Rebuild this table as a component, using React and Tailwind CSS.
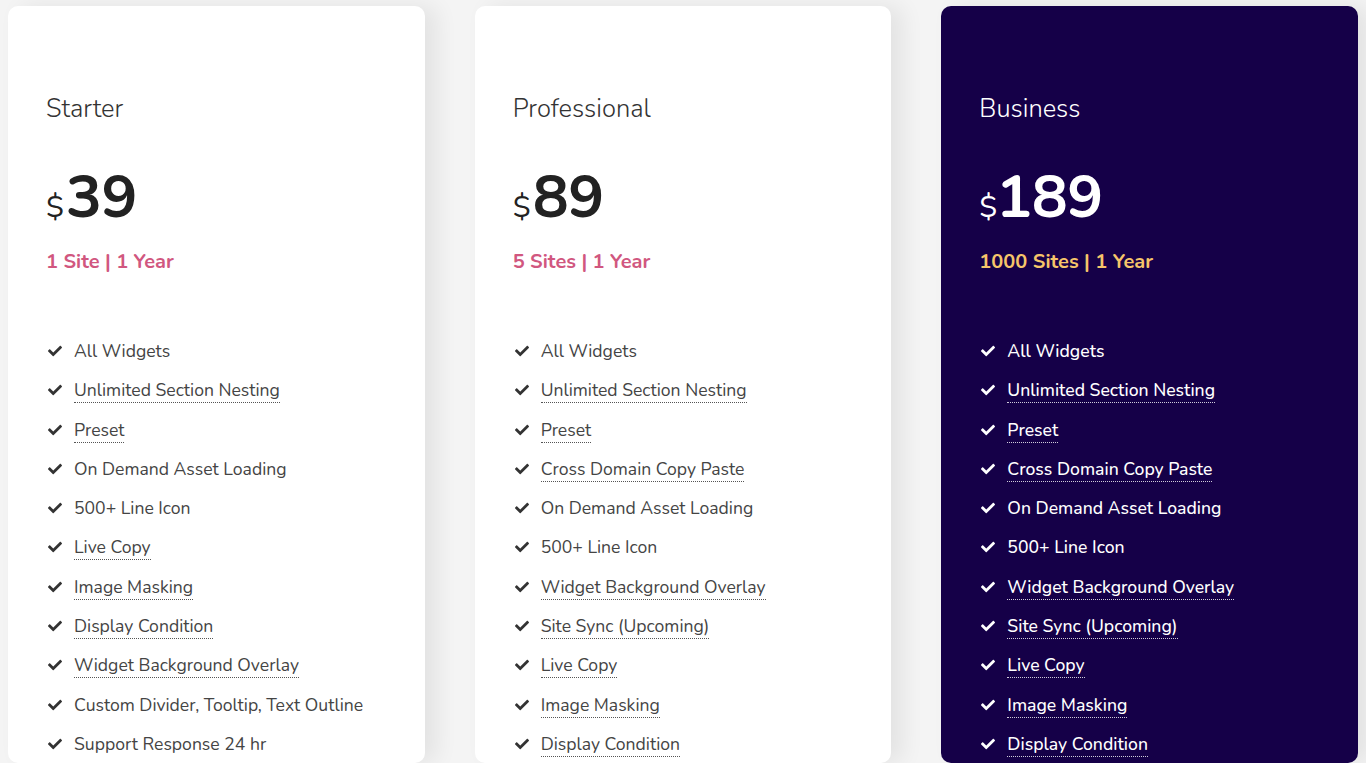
import React from "react";
import { FaCheck } from "react-icons/fa";

const plans = [
  {
    name: "Starter",
    price: "39",
    sub: "1 Site | 1 Year",
    dark: false,
    features: [
      ["All Widgets", false],
      ["Unlimited Section Nesting", true],
      ["Preset", true],
      ["On Demand Asset Loading", false],
      ["500+ Line Icon", false],
      ["Live Copy", true],
      ["Image Masking", true],
      ["Display Condition", true],
      ["Widget Background Overlay", true],
      ["Custom Divider, Tooltip, Text Outline", false],
      ["Support Response 24 hr", false],
    ],
  },
  {
    name: "Professional",
    price: "89",
    sub: "5 Sites | 1 Year",
    dark: false,
    features: [
      ["All Widgets", false],
      ["Unlimited Section Nesting", true],
      ["Preset", true],
      ["Cross Domain Copy Paste", true],
      ["On Demand Asset Loading", false],
      ["500+ Line Icon", false],
      ["Widget Background Overlay", true],
      ["Site Sync (Upcoming)", true],
      ["Live Copy", true],
      ["Image Masking", true],
      ["Display Condition", true],
    ],
  },
  {
    name: "Business",
    price: "189",
    sub: "1000 Sites | 1 Year",
    dark: true,
    features: [
      ["All Widgets", false],
      ["Unlimited Section Nesting", true],
      ["Preset", true],
      ["Cross Domain Copy Paste", true],
      ["On Demand Asset Loading", false],
      ["500+ Line Icon", false],
      ["Widget Background Overlay", true],
      ["Site Sync (Upcoming)", true],
      ["Live Copy", true],
      ["Image Masking", true],
      ["Display Condition", true],
    ],
  },
];

function Card({ plan }) {
  const dark = plan.dark;
  return (
    <div
      className={
        "flex-1 rounded-[10px] px-[38px] pt-[89px] pb-16 shadow-[12px_0_22px_rgba(0,0,0,0.07)] " +
        (dark ? "bg-[#150048]" : "bg-white")
      }
    >
      <div
        className={
          "text-[25.5px] leading-[28px] font-light " +
          (dark ? "text-white" : "text-[#333333]")
        }
      >
        {plan.name}
      </div>
      <div className="mt-[42px] flex items-baseline">
        <span
          className={
            "text-[30px] leading-none font-normal mr-[2px] " +
            (dark ? "text-white" : "text-[#222222]")
          }
        >
          $
        </span>
        <span
          className={
            "text-[60px] leading-[64px] font-bold tracking-[-0.5px] " +
            (dark ? "text-white -ml-[3px]" : "text-[#222222]")
          }
        >
          {plan.price}
        </span>
      </div>
      <div
        className={
          "mt-[19px] text-[20px] leading-[28px] font-bold " +
          (dark ? "text-[#f6c56a]" : "text-[#d1577f]")
        }
      >
        {plan.sub}
      </div>
      <ul className="mt-[63px] flex flex-col">
        {plan.features.map(([f, dotted], i) => (
          <li key={i} className="flex items-start h-[39.3px]">
            <FaCheck
              className={
                "mt-[5px] ml-[2px] w-[14px] h-[14px] mr-[12px] shrink-0 " +
                (dark ? "text-white" : "text-[#333333]")
              }
            />
            <span
              className={
                "text-[17.6px] leading-[24px] " +
                (dark ? "text-white font-medium" : "text-[#444444]") +
                (dotted
                  ? dark
                    ? " border-b border-dotted border-white/80"
                    : " border-b border-dotted border-[#555555]"
                  : "")
              }
            >
              {f}
            </span>
          </li>
        ))}
      </ul>
    </div>
  );
}

export default function App() {
  return (
    <div
      className="w-[1366px] h-[763px] overflow-hidden bg-[#f4f4f4] px-2 pt-[6px] flex gap-[50px]"
      style={{ fontFamily: '"Nunito", "Lato", "Open Sans", sans-serif' }}
    >
      {plans.map((p) => (
        <Card key={p.name} plan={p} />
      ))}
    </div>
  );
}
